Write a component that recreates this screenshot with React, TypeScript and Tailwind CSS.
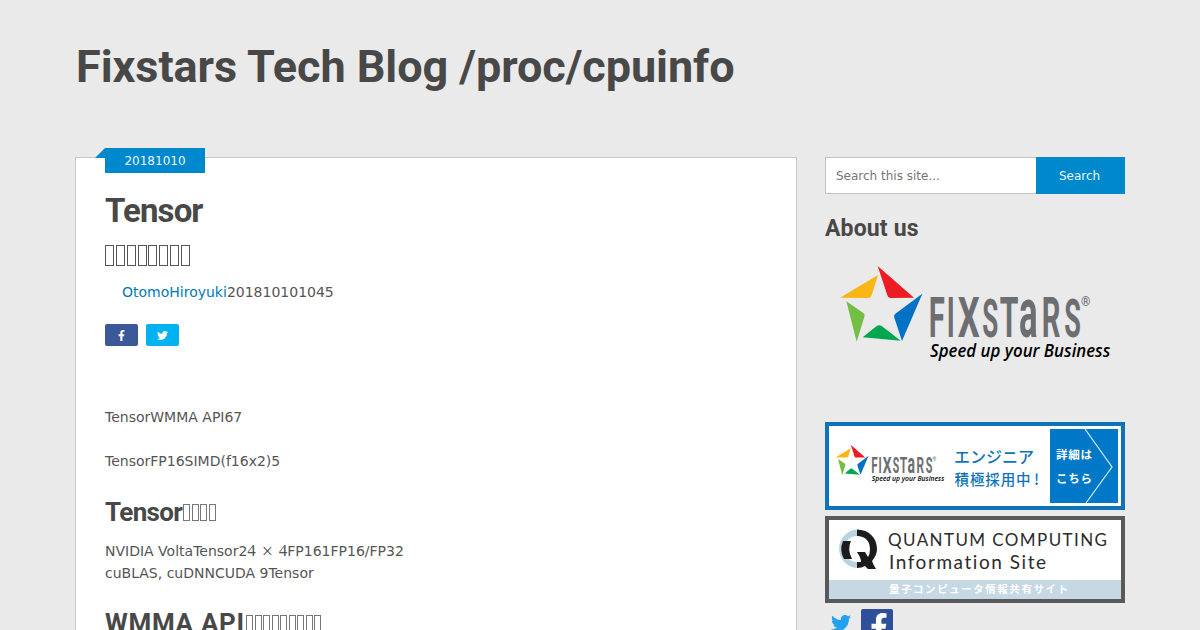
import { FaFacebookF, FaTwitter } from "react-icons/fa";

const HEADING = "font-[Roboto,'Noto_Sans',sans-serif] font-bold text-[#484848]";

interface BoxesProps {
  count: number;
  large?: boolean;
}

// Row of empty glyph boxes
function Boxes({ count, large = false }: BoxesProps) {
  return (
    <span className={large ? "flex gap-[1.75px] pl-[0.4px]" : "flex gap-[1.5px] pl-px"}>
      {Array.from({ length: count }, (_, i) => (
        <span
          key={i}
          className={
            large
              ? "h-[21px] w-[9px] border border-[#555]"
              : "h-[17px] w-[7px] border border-[#777]"
          }
        />
      ))}
    </span>
  );
}

const LETTERS = [
  { char: "F", x: 311, width: 48, size: 165 },
  { char: "I", x: 365, width: 24, size: 165 },
  { char: "X", x: 398, width: 66, size: 165 },
  { char: "S", x: 472, width: 48, size: 161 },
  { char: "T", x: 524, width: 56, size: 165 },
  { char: "a", x: 582, width: 56, size: 213 },
  { char: "R", x: 650, width: 56, size: 165 },
  { char: "S", x: 718, width: 50, size: 161 },
];

function FixstarsLogo() {
  return (
    <g>
      <path fill="#fbb615" d="M45 128L159 60L140 121Q138 129 131 129Z" />
      <path fill="#ed1c24" d="M158 33L267 128L196 129Q189 129 187 121Z" />
      <path fill="#0072c6" d="M292 116L231 258L208 188Q205 180 213 175Z" />
      <path fill="#72bf44" d="M64 139L114 173Q121 178 118 186L95 260Z" />
      <path fill="#00a650" d="M113 247L155 213Q162 208 170 213L227 257Z" />
      <g fill="#6d6e71" fontFamily="Roboto, 'Liberation Sans', sans-serif">
        {LETTERS.map((l) => (
          <text
            key={l.x}
            x={l.x}
            y="246"
            fontSize={l.size}
            fontWeight="700"
            textLength={l.width}
            lengthAdjust="spacingAndGlyphs"
          >
            {l.char}
          </text>
        ))}
        <text x="768" y="154" fontSize="36" fontWeight="700">
          ®
        </text>
      </g>
      <text
        x="315"
        y="307"
        fontSize="55"
        fontFamily="'Open Sans', 'Noto Sans', sans-serif"
        fontStyle="italic"
        fontWeight="600"
        textLength="541"
        lengthAdjust="spacingAndGlyphs"
      >
        Speed up your Business
      </text>
    </g>
  );
}

function RecruitBanner() {
  return (
    <svg
      className="block"
      width="300"
      height="88"
      viewBox="0 0 300 88"
      fontFamily="'Noto Sans CJK JP', sans-serif"
    >
      <rect width="300" height="88" fill="#0e73b9" />
      <rect x="4" y="4" width="292" height="80" fill="#fff" />
      <g transform="translate(4.5 18.3) scale(0.134)">
        <FixstarsLogo />
      </g>
      <g fill="#0e73b9" fontWeight="500">
        <text x="129" y="41" fontSize="16" textLength="80">
          エンジニア
        </text>
        <text x="129.500" y="63" fontSize="14.500" textLength="76">
          積極採用中
        </text>
        <text x="209" y="63" fontSize="15">
          !
        </text>
      </g>
      <rect x="225" y="7" width="68" height="74" fill="#0078c8" />
      <path
        d="M260 7L287 45L261 81"
        fill="none"
        stroke="#d8effb"
        strokeWidth="1.2"
      />
      <g fill="#fff" fontSize="11.5" fontWeight="700">
        <text x="231" y="37" textLength="36">
          詳細は
        </text>
        <text x="231" y="61" textLength="36">
          こちら
        </text>
      </g>
    </svg>
  );
}

function QuantumBanner() {
  return (
    <svg className="block" width="300" height="87" viewBox="0 0 300 87">
      <rect width="300" height="87" fill="#595959" />
      <rect x="4" y="4" width="292" height="79" fill="#fff" />
      <rect x="4" y="64" width="292" height="19" fill="#c7d8e5" />
      <path
        fill="#b9d3e1"
        d="M32 13.500A19.300 19.300 0 0 0 32 52V46A12.500 12.500 0 0 1 32 20Z"
      />
      <path fill="#1c1c1c" d="M18 25H26Q22 33 27 43H19Q14 34 18 25Z" />
      <path
        fill="#1c1c1c"
        d="M32 13.500C44 13.500 52 22 52 33Q52 39 47 45Q48 48 51 53H43L40 50Q37 52 32 52V46H36Q36 42 32 36H40L43 41Q45 38 45 33C45 25 40 20 32 20Z"
      />
      <g
        className="[font-variant-ligatures:none]"
        fill="#2b2b2b"
        fontFamily="Lato, sans-serif"
      >
        <text
          x="63"
          y="30"
          fontSize="17"
          textLength="219"
          lengthAdjust="spacing"
        >
          QUANTUM COMPUTING
        </text>
        <text x="64" y="53" fontSize="19" textLength="157">
          Information Site
        </text>
      </g>
      <text
        x="64"
        y="77"
        fill="#fff"
        fontFamily="'Noto Sans CJK JP', sans-serif"
        fontSize="10.500"
        fontWeight="700"
        textLength="179"
      >
        量子コンピュータ情報共有サイト
      </text>
    </svg>
  );
}

function Sidebar() {
  return (
    <aside className="w-[300px]">
      <form className="flex h-[37px] text-xs">
        <input
          className="w-[211px] border border-r-0 border-[#c4c4c4] bg-white px-2.5 placeholder:text-[#757575]"
          placeholder="Search this site..."
        />
        <button
          type="button"
          className="flex-1 bg-[#0088cc] pr-0.5 text-[#eaf8ff]"
        >
          Search
        </button>
      </form>
      <h3
        className={`mt-[19px] text-[23px] leading-8 tracking-[0.15px] ${HEADING}`}
      >
        About us
      </h3>
      <svg
        className="mt-[10px] block overflow-visible"
        width="300"
        height="115"
        viewBox="0 0 900 345"
      >
        <FixstarsLogo />
      </svg>
      <div className="mt-[52px] flex flex-col gap-1.5">
        <RecruitBanner />
        <QuantumBanner />
        <div className="flex gap-2.5">
          <FaTwitter className="mt-1 ml-1.5 size-5 text-[#22a1f0]" />
          <span className="flex size-8 justify-end rounded-[2px] bg-[#2f4f9b] pt-1 text-white">
            <FaFacebookF className="size-7" />
          </span>
        </div>
      </div>
    </aside>
  );
}

function Article() {
  return (
    <article className="h-[700px] w-[722px] border border-[#c8c8c8] bg-white px-[29px]">
      <div className="relative -mt-2.5 flex h-[25px] w-[100px] items-center justify-center bg-[#0088cc] text-xs text-[#eaf8ff]">
        <span className="absolute top-0 -left-2.5 size-2.5 bg-[#0088cc] [clip-path:polygon(100%_0,100%_100%,0_100%)]" />
        20181010
      </div>
      <h1
        className={`mt-4 text-[33px] leading-[44px] tracking-[-0.9px] ${HEADING}`}
      >
        Tensor
      </h1>
      <div className="mt-3">
        <Boxes count={8} large />
      </div>
      <p className="mt-[15px] pl-[17px] leading-[22px]">
        <a className="text-[#0079b8]">OtomoHiroyuki</a>201810101045
      </p>
      <div className="mt-[21px] flex gap-2 text-white">
        <span className="flex h-[22px] w-[33px] items-center justify-center rounded-[2px] bg-[#3b5998]">
          <FaFacebookF className="size-[11px]" />
        </span>
        <span className="flex h-[22px] w-[33px] items-center justify-center rounded-[2px] bg-[#00b3f0]">
          <FaTwitter className="size-[11px]" />
        </span>
      </div>
      <p className="mt-[60px] leading-[22px]">TensorWMMA API67</p>
      <p className="mt-[22px] leading-[22px]">TensorFP16SIMD(f16x2)5</p>
      <h2
        className={`mt-[22px] flex items-center text-[26px] leading-9 ${HEADING}`}
      >
        <span className="w-[77px] tracking-[-0.65px]">Tensor</span>
        <Boxes count={4} />
      </h2>
      <div className="mt-[10px] leading-[22px]">
        <p className="flex">
          NVIDIA VoltaTensor2
          <span className="flex w-[40px] justify-between font-['Liberation_Serif',serif] text-[17px]">
            <span>4</span>
            <span className="text-[20px]">×</span>
            <span>4</span>
          </span>
          FP161FP16/FP32
        </p>
        <p>cuBLAS, cuDNNCUDA 9Tensor</p>
      </div>
      <h2
        className={`mt-[21px] flex items-center text-[26px] leading-9 ${HEADING}`}
      >
        <span className="w-[140px] tracking-[0.7px] whitespace-nowrap">
          WMMA API
        </span>
        <Boxes count={9} />
      </h2>
    </article>
  );
}

export default function App() {
  return (
    <div className="h-[630px] overflow-hidden bg-[#eaeaea] font-['DejaVu_Sans',sans-serif] text-sm text-[#555]">
      <div className="mx-auto w-[1050px]">
        <header className="h-[157px] pt-[37px] pl-px">
          <h1
            className={`text-[45px] leading-[60px] tracking-[-0.06px] whitespace-nowrap ${HEADING}`}
          >
            Fixstars Tech Blog /proc/cpuinfo
          </h1>
        </header>
        <div className="flex items-start gap-7">
          <Article />
          <Sidebar />
        </div>
      </div>
    </div>
  );
}
